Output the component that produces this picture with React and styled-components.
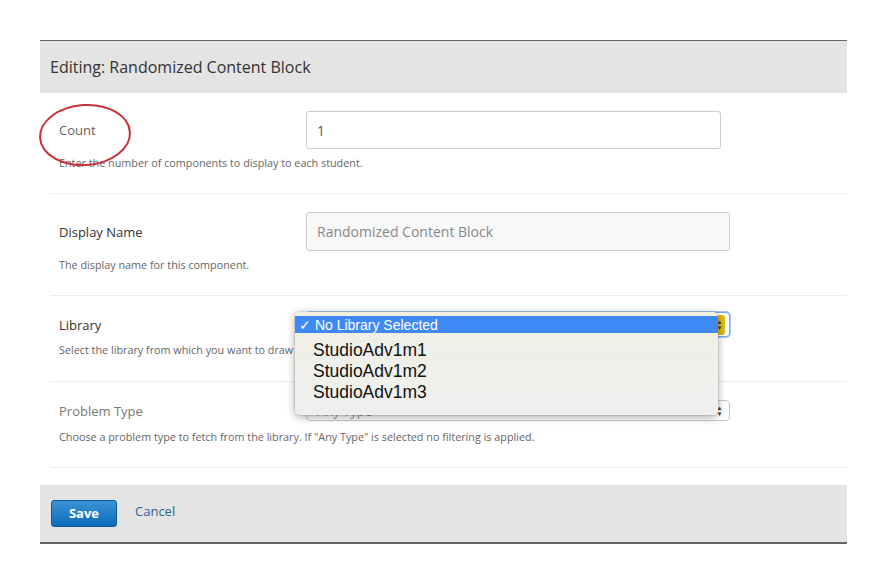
import React from 'react';
import styled, { createGlobalStyle } from 'styled-components';

const GlobalStyle = createGlobalStyle`
body{
    margin: 0;
    background: #fff;
    font-family: "Open Sans", "Liberation Sans", sans-serif;
}
`;

const Page = styled.div`
padding: 40px 40px 0 40px;
width: 807px;
`;

const Panel = styled.section`
position: relative;
border-top: 1px solid #666;
`;

const Header = styled.div`
height: 52px;
display: flex;
align-items: center;
padding: 0 10px;
background: #e4e4e4;
color: #333;
font-size: 16px;
`;

const Form = styled.div`
padding-left: 10px;
`;

const Field = styled.div`
position: relative;
padding: ${p => p.$top || 18}px 0 ${p => p.$bottom || 23}px 0;
border-bottom: 1px solid #ececec;
`;

const FieldRow = styled.div`
display: flex;
align-items: center;
`;

const Label = styled.label`
width: 256px;
padding-left: 9px;
box-sizing: border-box;
font-size: 13px;
color: ${p => p.$color || '#333'};
`;

const Help = styled.p`
margin: ${p => p.$gap || 6}px 0 0 0;
padding-left: 9px;
font-size: 10.8px;
line-height: 15px;
color: #666;
white-space: nowrap;
`;

const Input = styled.div`
width: ${p => p.$width}px;
height: ${p => p.$height}px;
box-sizing: border-box;
display: flex;
align-items: center;
padding: 0 10px;
border: 1px solid #ccc;
border-radius: 3px;
background: ${p => p.$filled ? '#f8f8f8' : '#fff'};
color: ${p => p.$filled ? '#888' : '#555'};
font-size: 14px;
`;

const Control = styled.div`
position: relative;
`;

const Select = styled.div`
width: 424px;
height: ${p => p.$height}px;
box-sizing: border-box;
display: flex;
align-items: center;
justify-content: space-between;
padding: 0 4px 0 10px;
border: 1px solid ${p => p.$focus ? '#7aaaf0' : '#c8c8c8'};
border-radius: 4px;
background: #fff;
box-shadow: ${p => p.$focus ? '0 0 0 1px #a9c8f6' : 'none'};
color: #999;
font-size: 13px;
`;

const Arrows = styled.span`
display: flex;
flex-direction: column;
align-items: center;
justify-content: center;
width: 11px;
height: ${p => p.$height || 18}px;
border-radius: 3px;
background: ${p => p.$yellow ? '#e2bb12' : 'transparent'};
font-size: 6px;
line-height: 6px;
color: #333;
`;

const Menu = styled.div`
position: absolute;
top: 0;
left: -11px;
width: 423px;
padding: 4px 0 12px 0;
box-sizing: border-box;
border-radius: 5px;
background: linear-gradient(180deg, #f1f0e0 0%, #efefea 45%, #efefef 100%);
box-shadow: 0 2px 8px rgba(0, 0, 0, 0.35), 0 0 0 1px rgba(0, 0, 0, 0.08);
font-family: "Liberation Sans", Arial, sans-serif;
z-index: 2;
`;

const Highlight = styled.div`
height: 17px;
display: flex;
align-items: center;
padding-left: 4px;
margin-bottom: 7px;
background: #3f89f7;
color: #fff;
font-size: 14px;
`;

const Option = styled.div`
padding-left: 18px;
font-size: 17.5px;
line-height: 21px;
color: #111;
`;

const Footer = styled.div`
margin-top: 17px;
height: 57px;
display: flex;
align-items: center;
gap: 18px;
padding-left: 11px;
background: #e4e4e4;
border-bottom: 2px solid #666;
`;

const SaveButton = styled.button`
width: 66px;
height: 27px;
margin-bottom: 1px;
border: 1px solid #0a5c9c;
border-radius: 3px;
background: linear-gradient(180deg, #3c93d4 0%, #0b6bb8 100%);
color: #fff;
font-family: "Open Sans", sans-serif;
font-weight: 700;
font-size: 13px;
`;

const CancelLink = styled.a`
color: #2f6190;
font-size: 13px;
line-height: 13px;
margin-bottom: 4px;
text-decoration: none;
`;

const Circle = styled.svg`
position: absolute;
left: -3px;
top: 60px;
pointer-events: none;
`;

const App = () => {
    return (
        <Page>
            <GlobalStyle />
            <Panel>
                <Header>Editing: Randomized Content Block</Header>
                <Form>
                    <Field>
                        <FieldRow>
                            <Label $color="#666">Count</Label>
                            <Input $width={415} $height={38}>1</Input>
                        </FieldRow>
                        <Help>Enter the number of components to display to each student.</Help>
                    </Field>
                    <Field $top={18}>
                        <FieldRow>
                            <Label>Display Name</Label>
                            <Input $width={424} $height={39} $filled>Randomized Content Block</Input>
                        </FieldRow>
                        <Help>The display name for this component.</Help>
                    </Field>
                    <Field $top={16} $bottom={24}>
                        <FieldRow>
                            <Label>Library</Label>
                            <Control>
                                <Select $height={25} $focus>
                                    <span>No Library Selected</span>
                                    <Arrows $yellow $height={20}><span>▲</span><span>▼</span></Arrows>
                                </Select>
                                <Menu>
                                    <Highlight>✓ No Library Selected</Highlight>
                                    <Option>StudioAdv1m1</Option>
                                    <Option>StudioAdv1m2</Option>
                                    <Option>StudioAdv1m3</Option>
                                </Menu>
                            </Control>
                        </FieldRow>
                        <Help $gap={5}>Select the library from which you want to draw content.</Help>
                    </Field>
                    <Field $top={18}>
                        <FieldRow>
                            <Label $color="#777">Problem Type</Label>
                            <Select $height={21}>
                                <span>Any Type</span>
                                <Arrows><span>▲</span><span>▼</span></Arrows>
                            </Select>
                        </FieldRow>
                        <Help $gap={8}>Choose a problem type to fetch from the library. If "Any Type" is selected no filtering is applied.</Help>
                    </Field>
                </Form>
                <Footer>
                    <SaveButton>Save</SaveButton>
                    <CancelLink href="#">Cancel</CancelLink>
                </Footer>
                <Circle width="98" height="68" viewBox="0 0 98 68">
                    <ellipse cx="48" cy="34" rx="45" ry="30" fill="none" stroke="#c7323b" strokeWidth="2" transform="rotate(-4 48 34)" />
                </Circle>
            </Panel>
        </Page>
    );
}

export default App;
